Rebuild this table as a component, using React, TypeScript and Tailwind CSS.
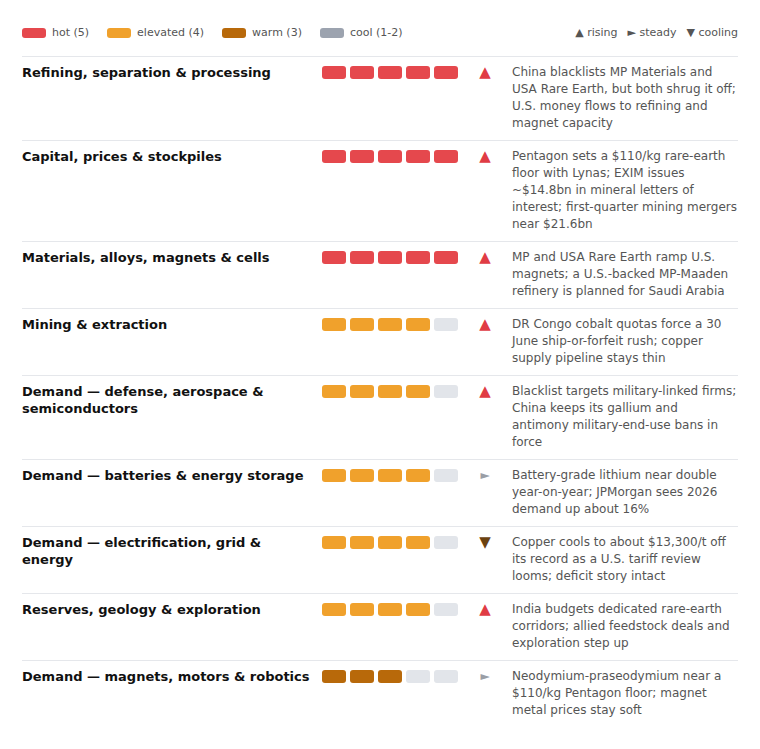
const HOT = 'bg-[#e5484d]';
const ELEVATED = 'bg-[#f0a12c]';
const WARM = 'bg-[#b8690a]';
const EMPTY = 'bg-[#e2e5ea]';

type Trend = 'up' | 'steady' | 'down';

interface Row {
  title: string;
  level: number;
  trend: Trend;
  note: string;
}

const rows: Row[] = [
  {
    title: 'Refining, separation & processing',
    level: 5,
    trend: 'up',
    note: 'China blacklists MP Materials and USA Rare Earth, but both shrug it off; U.S. money flows to refining and magnet capacity',
  },
  {
    title: 'Capital, prices & stockpiles',
    level: 5,
    trend: 'up',
    note: 'Pentagon sets a $110/kg rare-earth floor with Lynas; EXIM issues ~$14.8bn in mineral letters of interest; first-quarter mining mergers near $21.6bn',
  },
  {
    title: 'Materials, alloys, magnets & cells',
    level: 5,
    trend: 'up',
    note: 'MP and USA Rare Earth ramp U.S. magnets; a U.S.-backed MP-Maaden refinery is planned for Saudi Arabia',
  },
  {
    title: 'Mining & extraction',
    level: 4,
    trend: 'up',
    note: 'DR Congo cobalt quotas force a 30 June ship-or-forfeit rush; copper supply pipeline stays thin',
  },
  {
    title: 'Demand — defense, aerospace & semiconductors',
    level: 4,
    trend: 'up',
    note: 'Blacklist targets military-linked firms; China keeps its gallium and antimony military-end-use bans in force',
  },
  {
    title: 'Demand — batteries & energy storage',
    level: 4,
    trend: 'steady',
    note: 'Battery-grade lithium near double year-on-year; JPMorgan sees 2026 demand up about 16%',
  },
  {
    title: 'Demand — electrification, grid & energy',
    level: 4,
    trend: 'down',
    note: 'Copper cools to about $13,300/t off its record as a U.S. tariff review looms; deficit story intact',
  },
  {
    title: 'Reserves, geology & exploration',
    level: 4,
    trend: 'up',
    note: 'India budgets dedicated rare-earth corridors; allied feedstock deals and exploration step up',
  },
  {
    title: 'Demand — magnets, motors & robotics',
    level: 3,
    trend: 'steady',
    note: 'Neodymium-praseodymium near a $110/kg Pentagon floor; magnet metal prices stay soft',
  },
];

function fillFor(level: number) {
  if (level >= 5) return HOT;
  if (level === 4) return ELEVATED;
  if (level === 3) return WARM;
  return 'bg-[#9ca3af]';
}

function TrendMark({ trend }: { trend: Trend }) {
  if (trend === 'up') return <span className="text-[15px] leading-[17px] text-[#e03c44]">▲</span>;
  if (trend === 'down') return <span className="text-[15px] leading-[17px] text-[#6b4210]">▼</span>;
  return <span className="text-[12px] leading-[17px] text-[#9a9ea6]">►</span>;
}

export default function App() {
  return (
    <div className="min-h-screen bg-white px-[22px] pt-[25px] font-['DejaVu_Sans',sans-serif] text-[#1f1f1f]">
      <div className="flex items-center justify-between pb-[14px] text-[11px] text-[#555]">
        <div className="flex items-center gap-[18px]">
          <span className="flex items-center gap-[6px]">
            <span className={`h-[10px] w-[24px] rounded-[3px] ${HOT}`} />
            hot (5)
          </span>
          <span className="flex items-center gap-[6px]">
            <span className={`h-[10px] w-[24px] rounded-[3px] ${ELEVATED}`} />
            elevated (4)
          </span>
          <span className="flex items-center gap-[6px]">
            <span className={`h-[10px] w-[24px] rounded-[3px] ${WARM}`} />
            warm (3)
          </span>
          <span className="flex items-center gap-[6px]">
            <span className="h-[10px] w-[24px] rounded-[3px] bg-[#9ca3af]" />
            cool (1-2)
          </span>
        </div>
        <div className="flex items-center gap-[10px]">
          <span>▲ rising</span>
          <span>► steady</span>
          <span>▼ cooling</span>
        </div>
      </div>

      <div>
        {rows.map((row) => (
          <div
            key={row.title}
            className="grid grid-cols-[288px_136px_30px_1fr] gap-x-[12px] border-t border-[#e5e7eb] pt-[7px] pb-[8px] text-[13px] leading-[17px]"
          >
            <div className="font-bold text-[#111]">{row.title}</div>
            <div className="flex gap-[4px] pt-[2px]">
              {[0, 1, 2, 3, 4].map((i) => (
                <span
                  key={i}
                  className={`h-[13px] w-[24px] rounded-[3px] ${i < row.level ? fillFor(row.level) : EMPTY}`}
                />
              ))}
            </div>
            <div className="flex justify-center">
              <TrendMark trend={row.trend} />
            </div>
            <div className="text-[12px] text-[#555]">{row.note}</div>
          </div>
        ))}
      </div>
    </div>
  );
}
